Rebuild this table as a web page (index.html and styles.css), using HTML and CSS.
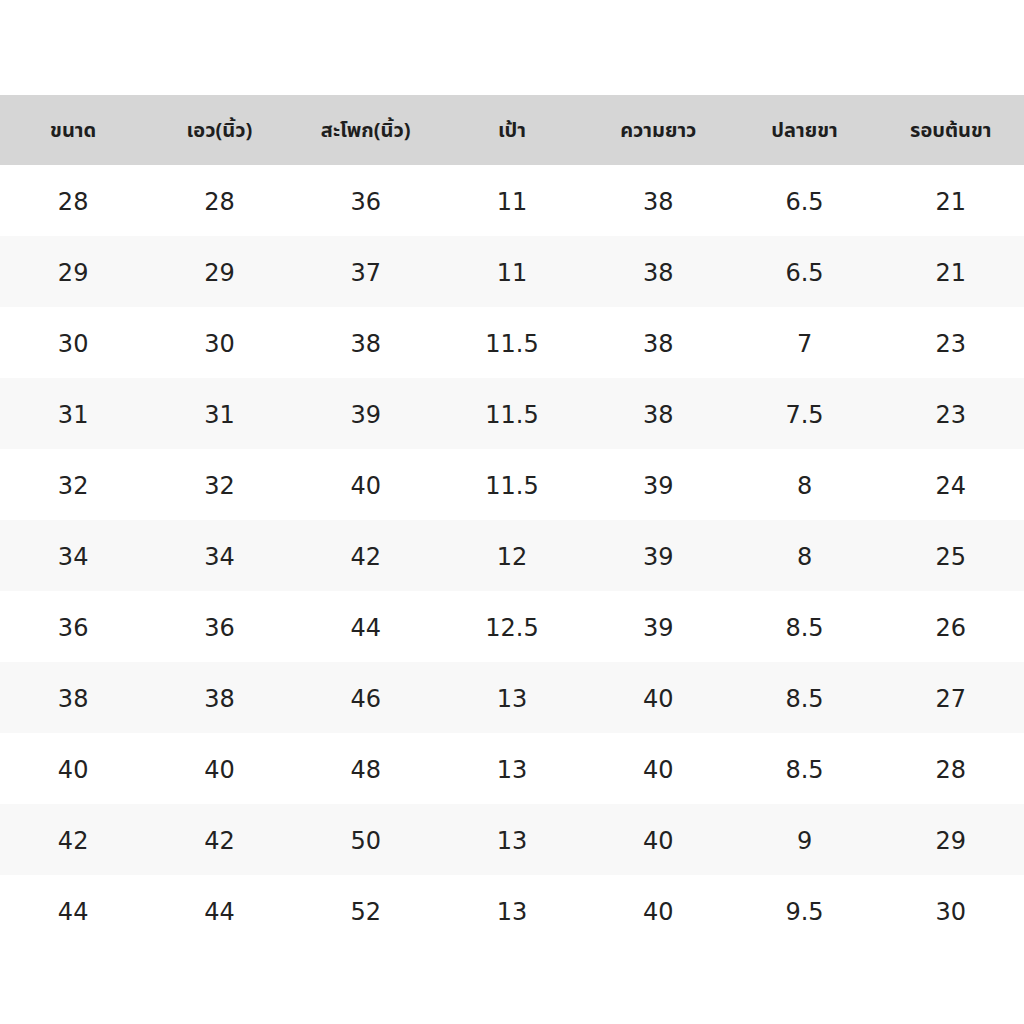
FILE: index.html
```html
<!DOCTYPE html>
<html lang="th">
<head>
<meta charset="utf-8">
<link rel="stylesheet" href="styles.css">
</head>
<body>
<div class="page">
  <table class="size-table">
    <thead>
      <tr>
        <th>ขนาด</th><th>เอว(นิ้ว)</th><th>สะโพก(นิ้ว)</th><th>เป้า</th><th>ความยาว</th><th>ปลายขา</th><th>รอบต้นขา</th>
      </tr>
    </thead>
    <tbody>
      <tr><td>28</td><td>28</td><td>36</td><td>11</td><td>38</td><td>6.5</td><td>21</td></tr>
      <tr><td>29</td><td>29</td><td>37</td><td>11</td><td>38</td><td>6.5</td><td>21</td></tr>
      <tr><td>30</td><td>30</td><td>38</td><td>11.5</td><td>38</td><td>7</td><td>23</td></tr>
      <tr><td>31</td><td>31</td><td>39</td><td>11.5</td><td>38</td><td>7.5</td><td>23</td></tr>
      <tr><td>32</td><td>32</td><td>40</td><td>11.5</td><td>39</td><td>8</td><td>24</td></tr>
      <tr><td>34</td><td>34</td><td>42</td><td>12</td><td>39</td><td>8</td><td>25</td></tr>
      <tr><td>36</td><td>36</td><td>44</td><td>12.5</td><td>39</td><td>8.5</td><td>26</td></tr>
      <tr><td>38</td><td>38</td><td>46</td><td>13</td><td>40</td><td>8.5</td><td>27</td></tr>
      <tr><td>40</td><td>40</td><td>48</td><td>13</td><td>40</td><td>8.5</td><td>28</td></tr>
      <tr><td>42</td><td>42</td><td>50</td><td>13</td><td>40</td><td>9</td><td>29</td></tr>
      <tr><td>44</td><td>44</td><td>52</td><td>13</td><td>40</td><td>9.5</td><td>30</td></tr>
    </tbody>
  </table>
</div>
</body>
</html>
```

FILE: styles.css
```css
html, body {
  margin: 0;
  padding: 0;
  background: #ffffff;
}
.page {
  width: 1024px;
  height: 1024px;
  padding-top: 95px;
  box-sizing: border-box;
}
.size-table {
  width: 1024px;
  border-collapse: collapse;
  table-layout: fixed;
  font-family: "DejaVu Sans", "Noto Sans", sans-serif;
  color: #222222;
}
.size-table th {
  height: 70px;
  padding: 1px 0 0;
  box-sizing: border-box;
  background: #d6d6d6;
  font-family: "Noto Sans Thai", "Noto Sans Thai UI", "Noto Sans", "DejaVu Sans", sans-serif;
  font-size: 20px;
  font-weight: bold;
  text-align: center;
  vertical-align: middle;
  color: #1e1e1e;
}
.size-table td {
  height: 71px;
  padding: 2px 0 0;
  box-sizing: border-box;
  font-size: 24px;
  text-align: center;
  vertical-align: middle;
}
.size-table tbody tr:nth-child(even) td {
  background: #f8f8f8;
}
```
